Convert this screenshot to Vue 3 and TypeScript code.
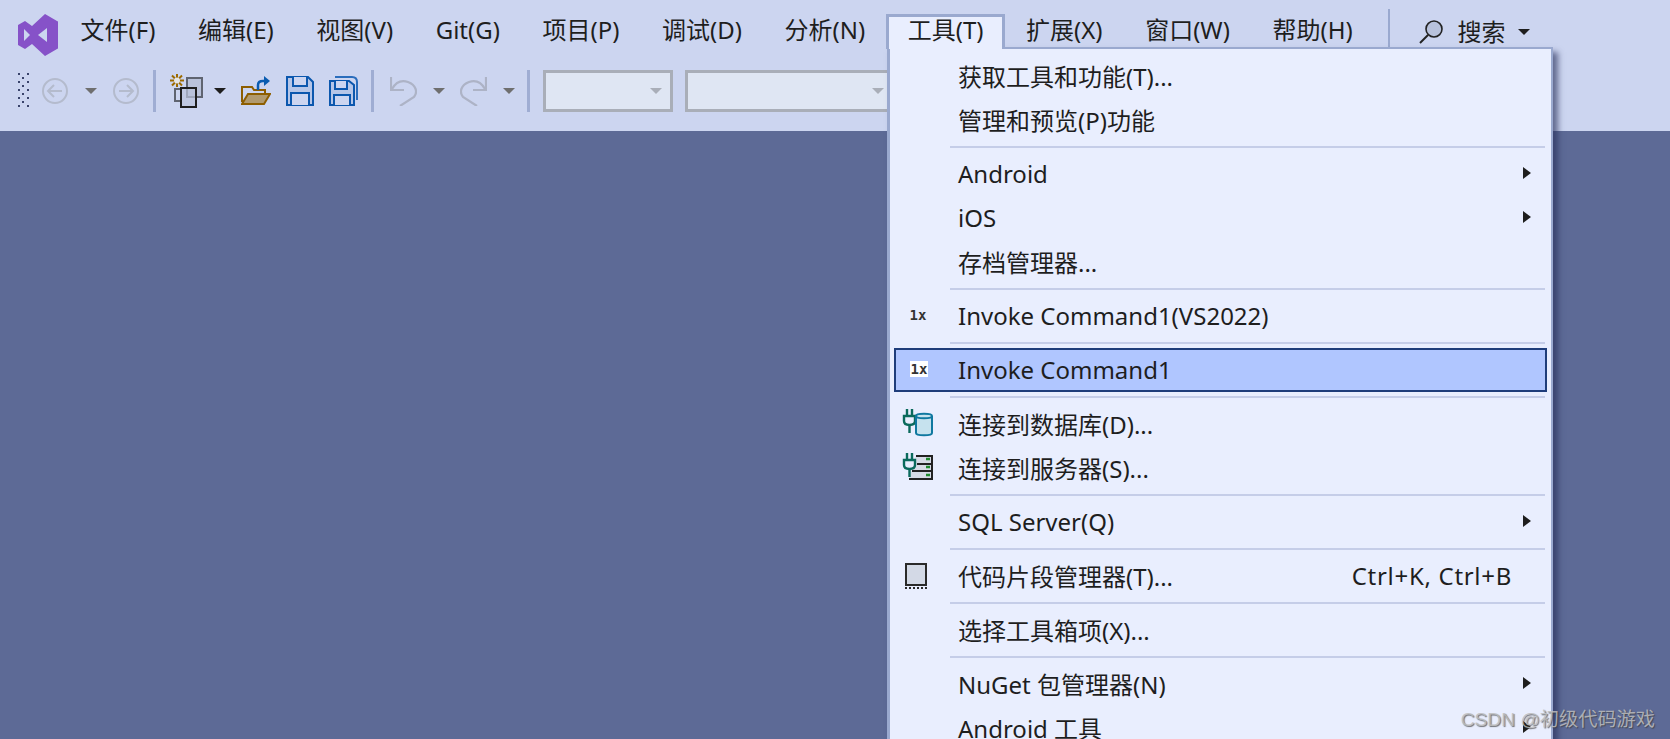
<script setup lang="ts">
interface MenuEntry {
  label?: string
  icon?: string
  shortcut?: string
  sub?: boolean
  active?: boolean
  sep?: boolean
}
const menubar: string[] = ['文件(F)', '编辑(E)', '视图(V)', 'Git(G)', '项目(P)', '调试(D)', '分析(N)']
const menubarEnd: string[] = ['扩展(X)', '窗口(W)', '帮助(H)']
const entries: MenuEntry[] = [
  { label: '获取工具和功能(T)...' },
  { label: '管理和预览(P)功能' },
  { sep: true },
  { label: 'Android', sub: true },
  { label: 'iOS', sub: true },
  { label: '存档管理器...' },
  { sep: true },
  { label: 'Invoke Command1(VS2022)', icon: '1x' },
  { sep: true },
  { label: 'Invoke Command1', icon: '1x', active: true },
  { sep: true },
  { label: '连接到数据库(D)...', icon: 'db' },
  { label: '连接到服务器(S)...', icon: 'server' },
  { sep: true },
  { label: 'SQL Server(Q)', sub: true },
  { sep: true },
  { label: '代码片段管理器(T)...', icon: 'snippet', shortcut: 'Ctrl+K, Ctrl+B' },
  { sep: true },
  { label: '选择工具箱项(X)...' },
  { sep: true },
  { label: 'NuGet 包管理器(N)', sub: true },
  { label: 'Android 工具', sub: true },
]
</script>

<template>
  <div class="ide">
    <header class="chrome">
      <div class="menubar">
        <svg class="logo" viewBox="0 0 40 44" width="40" height="44">
          <path fill="#8652c8" d="M27 1 39 8a1 1 0 0 1 1 1V35a1 1 0 0 1-1 1L27 43 14 31 7 36 0 32V12L7 8l7 5Z" />
          <path fill="#ccd5f0" d="M20 22 29 15V29Z" />
          <path fill="#ccd5f0" d="M6 16 12 22 6 28Z" />
        </svg>
        <span v-for="m in menubar" :key="m" class="mitem">{{ m }}</span>
        <span class="mitem tab">工具(T)</span>
        <span v-for="m in menubarEnd" :key="m" class="mitem">{{ m }}</span>
        <span class="vline"></span>
        <div class="search">
          <svg viewBox="0 0 26 26" width="26" height="26">
            <circle cx="16" cy="10" r="8" fill="#b8c2dc" stroke="#222" stroke-width="1.6" />
            <path d="M10 16 2 24" stroke="#222" stroke-width="2" fill="none" />
          </svg>
          <span>搜索</span>
          <i class="arrow black"></i>
        </div>
      </div>
      <div class="toolbar">
        <svg class="grip" width="11" height="36" viewBox="0 0 11 36">
          <defs>
            <pattern id="gripdots" width="11" height="8" patternUnits="userSpaceOnUse">
              <rect x="0" y="0" width="2" height="2" fill="#39436b" />
              <rect x="9" y="0" width="2" height="2" fill="#39436b" />
              <rect x="4" y="4" width="2" height="2" fill="#39436b" />
            </pattern>
          </defs>
          <rect width="11" height="36" fill="url(#gripdots)" />
        </svg>
        <svg class="ico first" viewBox="0 0 26 26" width="26" height="26">
          <circle cx="13" cy="13" r="12" fill="none" stroke="#b4bbcd" stroke-width="2" />
          <path d="M20 13H7M12 7l-6 6 6 6" fill="none" stroke="#b4bbcd" stroke-width="2" />
        </svg>
        <i class="arrow grey a1"></i>
        <svg class="ico a2" viewBox="0 0 26 26" width="26" height="26">
          <circle cx="13" cy="13" r="12" fill="none" stroke="#b4bbcd" stroke-width="2" />
          <path d="M6 13H19M14 7l6 6-6 6" fill="none" stroke="#b4bbcd" stroke-width="2" />
        </svg>
        <span class="tsep s1"></span>
        <svg class="ico newp" viewBox="0 0 34 34" width="34" height="34">
          <path d="M7 0V13M0 6.500H14M2 1.500 12 11.500M12 1.500 2 11.500" stroke="#9c6a00" stroke-width="2" />
          <circle cx="7" cy="6.500" r="3" fill="#e6e6e6" />
          <rect x="17" y="4" width="15" height="19" fill="#b9c2da" stroke="#5f6470" stroke-width="2" />
          <path d="M5 15H12M5 14V27H11" fill="none" stroke="#5f6470" stroke-width="2" />
          <rect x="11" y="14" width="15" height="19" fill="#b9c2da" fill-opacity=".7" stroke="#1e1e1e" stroke-width="2" />
        </svg>
        <i class="arrow black a3"></i>
        <svg class="ico folder" viewBox="0 0 30 30" width="30" height="30">
          <path d="M1 26V11H11L13 14H24V26" fill="none" stroke="#8d5e00" stroke-width="2" />
          <path d="M1 28 7 18H29L23 28Z" fill="#b19a6e" stroke="#8d5e00" stroke-width="2" />
          <path d="M17 14V9C17 6 19 5 22 5H25" fill="none" stroke="#0a5cb0" stroke-width="2.500" />
          <path d="M23 0 29 5 23 10Z" fill="#0a5cb0" />
        </svg>
        <svg class="ico save" viewBox="0 0 28 30" width="28" height="30">
          <path d="M1 1H22L27 6V29H1Z" fill="#b6c6e8" stroke="#0b57ae" stroke-width="2" />
          <path d="M7 1V10H21V1" fill="#ccd5f0" stroke="#0b57ae" stroke-width="2" />
          <path d="M5 29V17H23V29" fill="#ccd5f0" stroke="#0b57ae" stroke-width="2" />
        </svg>
        <svg class="ico saveall" viewBox="0 0 29 30" width="29" height="30">
          <path d="M6 1H23Q28 1 28 6V24" fill="none" stroke="#2a6dbc" stroke-width="2" />
          <path d="M1 5H20L25 9V29H1Z" fill="#b6c6e8" stroke="#0b57ae" stroke-width="2" />
          <path d="M6 5V13H18V5" fill="#ccd5f0" stroke="#0b57ae" stroke-width="2" />
          <path d="M5 29V19H21V29" fill="#ccd5f0" stroke="#0b57ae" stroke-width="2" />
        </svg>
        <span class="tsep s2"></span>
        <svg class="ico undo" viewBox="0 0 27 30" width="27" height="30">
          <path d="M1 1V14H14" fill="none" stroke="#adb3c6" stroke-width="2.200" />
          <path d="M2 13C6 6 12 4 18 6 26 9 28 16 24 21L10 30" fill="none" stroke="#adb3c6" stroke-width="2.200" />
        </svg>
        <i class="arrow grey a4"></i>
        <svg class="ico redo" viewBox="0 0 27 30" width="27" height="30">
          <path d="M26 1V14H13" fill="none" stroke="#adb3c6" stroke-width="2.200" />
          <path d="M25 13C21 6 15 4 9 6 1 9-1 16 3 21L17 30" fill="none" stroke="#adb3c6" stroke-width="2.200" />
        </svg>
        <i class="arrow grey a5"></i>
        <span class="tsep s3"></span>
        <div class="combo c1"><i class="arrow pale"></i></div>
        <div class="combo c2"><i class="arrow pale"></i></div>
      </div>
    </header>

    <main class="workspace"></main>

    <nav class="dropdown">
      <template v-for="(e, i) in entries" :key="i">
        <div v-if="e.sep" class="sep"></div>
        <div v-else class="row" :class="{ active: e.active }">
          <span class="gutter">
            <span v-if="e.icon === '1x'" class="onex">1x</span>
            <svg v-else-if="e.icon === 'db'" class="menuicon" viewBox="0 0 32 28" width="32" height="28">
              <path d="M7.500 16C10 16 13 15 13 12V7H2V12C2 15 5 16 7.500 16Z" fill="#e9eefe" stroke="#0a6a5c" stroke-width="2.400" />
              <path d="M5 0V7M10 0V7M7.500 16V24" fill="none" stroke="#0a6a5c" stroke-width="2.400" />
              <path d="M14 7C14 4 30 4 30 7V24C30 27 14 27 14 24Z" fill="#c6e2ee" stroke="#0f78a0" stroke-width="2" />
              <path d="M14 7C14 10 30 10 30 7" fill="none" stroke="#0f78a0" stroke-width="2" />
            </svg>
            <svg v-else-if="e.icon === 'server'" class="menuicon" viewBox="0 0 32 28" width="32" height="28">
              <path d="M14 3H30V26H7" fill="#d6dbe6" stroke="#222" stroke-width="2" />
              <path d="M15 11H30M10 18H30" stroke="#222" stroke-width="2" />
              <path d="M24 6H28M24 14H28M24 22H28" stroke="#1f8a2e" stroke-width="2.500" />
              <path d="M7.500 16C10 16 13 15 13 12V7H2V12C2 15 5 16 7.500 16Z" fill="#e9eefe" stroke="#0a6a5c" stroke-width="2.400" />
              <path d="M5 0V7M10 0V7M7.500 16V24" fill="none" stroke="#0a6a5c" stroke-width="2.400" />
            </svg>
            <svg v-else-if="e.icon === 'snippet'" class="snip" viewBox="0 0 24 26" width="24" height="26">
              <rect x="2" y="1" width="20" height="21" fill="#d3d9e6" stroke="#2a2a2a" stroke-width="2" />
              <path d="M1 25H23" stroke="#2a2a2a" stroke-width="2" stroke-dasharray="2 2" />
            </svg>
          </span>
          <span class="label">{{ e.label }}</span>
          <span v-if="e.shortcut" class="shortcut">{{ e.shortcut }}</span>
          <i v-if="e.sub" class="caret"></i>
        </div>
      </template>
    </nav>

    <span class="watermark">CSDN @初级代码游戏</span>
  </div>
</template>

<style>
html, body { margin: 0; padding: 0; overflow: hidden; }
</style>

<style scoped>
.ide {
  position: relative;
  width: 1670px;
  height: 739px;
  overflow: hidden;
  display: flex;
  flex-direction: column;
  background: #5d6a96;
  font-family: "Noto Sans", "Noto Sans CJK SC", sans-serif;
  font-size: 24px;
  color: #1e1e1e;
}
.chrome {
  height: 131px;
  background: #ccd5f0;
  flex: none;
}
.workspace { flex: 1; }
.menubar {
  display: flex;
  align-items: center;
  padding-top: 14px;
  box-sizing: border-box;
  height: 49px;
  padding-left: 18px;
  position: relative;
}
.logo { flex: none; margin-top: 7px; margin-right: 1.200px; }
.mitem {
  flex: none;
  padding: 0 21.300px;
  height: 35px;
  line-height: 31px;
  white-space: nowrap;
  box-sizing: border-box;
}
.mitem:first-of-type { margin-left: 1.500px; padding-left: 19.800px; }
.tab {
  background: #e9eefe;
  border: 3px solid #9aa9cf;
  border-bottom: none;
  padding: 0 18.300px;
  line-height: 26px;
  position: relative;
  z-index: 3;
}
.vline {
  width: 2px;
  height: 40px;
  margin: -5px 0 0 14.500px;
  background: #9aa9cf;
  flex: none;
}
.search {
  display: flex;
  align-items: center;
  margin-left: 28px;
  gap: 13px;
  line-height: 29px;
  height: 35px;
}
.toolbar {
  display: flex;
  align-items: center;
  height: 42px;
  margin-top: 21px;
  padding-left: 18px;
}
.grip { flex: none; }
.ico { flex: none; }
.first { margin-left: 13px; }
.arrow {
  flex: none;
  display: block;
  width: 0;
  height: 0;
  border-left: 6px solid transparent;
  border-right: 6px solid transparent;
  border-top: 6px solid #6f6f6f;
}
.arrow.black { border-top-color: #1e1e1e; }
.arrow.pale { border-top-color: #a9aeb8; }
.a1 { margin-left: 17px; }
.a2 { margin-left: 16px; }
.tsep {
  flex: none;
  width: 3px;
  height: 42px;
  background: #9fadd3;
}
.s1 { margin-left: 14px; }
.newp { margin-left: 14px; }
.a3 { margin-left: 10px; }
.folder { margin-left: 15px; }
.save { margin-left: 15px; }
.saveall { margin-left: 15px; }
.s2 { margin-left: 13px; }
.undo { margin-left: 16px; }
.a4 { margin-left: 16px; }
.redo { margin-left: 15px; }
.a5 { margin-left: 16px; }
.s3 { margin-left: 12px; }
.combo {
  flex: none;
  height: 42px;
  box-sizing: border-box;
  background: #dfe6f3;
  border: 3px solid #a9aeb8;
  display: flex;
  align-items: center;
  justify-content: flex-end;
  padding-right: 8px;
}
.c1 { width: 130px; margin-left: 13px; }
.c2 { width: 210px; margin-left: 12px; }
.dropdown {
  position: absolute;
  left: 887px;
  top: 47px;
  width: 666px;
  height: 720px;
  box-sizing: border-box;
  background: #e9eefe;
  border: 2px solid #9aa9cf;
  border-left-width: 3px;
  padding: 5px 4px 0 4px;
  box-shadow: 5px 5px 6px rgba(40, 48, 90, 0.65);
  z-index: 2;
}
.row {
  display: flex;
  align-items: center;
  height: 44px;
  padding-bottom: 2px;
  box-sizing: border-box;
  white-space: nowrap;
}
.row.active {
  background: #b0c6ff;
  border: 2px solid #1f3d7a;
}
.gutter {
  flex: none;
  width: 64px;
  display: flex;
  align-items: center;
  justify-content: center;
  padding-right: 16px;
  box-sizing: border-box;
}
.row.active .gutter { width: 62px; }
.menuicon { margin-left: -1px; }
.snip { margin-top: 2px; margin-left: -4px; }
.onex {
  font-family: "DejaVu Sans Mono", monospace;
  font-size: 14px;
  font-weight: 700;
  line-height: 16px;
  color: #333;
  padding: 0 1px;
}
.row.active .onex { background: #fff; }
.label { flex: 1; }
.shortcut { margin-right: 35px; letter-spacing: 0.7px; }
.caret {
  flex: none;
  width: 0;
  height: 0;
  margin-right: 16px;
  border-top: 6px solid transparent;
  border-bottom: 6px solid transparent;
  border-left: 8px solid #1e1e1e;
}
.sep {
  height: 2px;
  margin: 4px 2px 4px 56px;
  background: #c5cde8;
}
.watermark {
  position: absolute;
  right: 15px;
  top: 708px;
  z-index: 5;
  font-family: "Liberation Sans", "Noto Sans CJK SC", sans-serif;
  font-size: 19.200px;
  line-height: 24px;
  color: rgba(190, 190, 190, 0.85);
  text-shadow: 1px 1px 1px rgba(60, 60, 60, 0.7);
  white-space: nowrap;
}
</style>
